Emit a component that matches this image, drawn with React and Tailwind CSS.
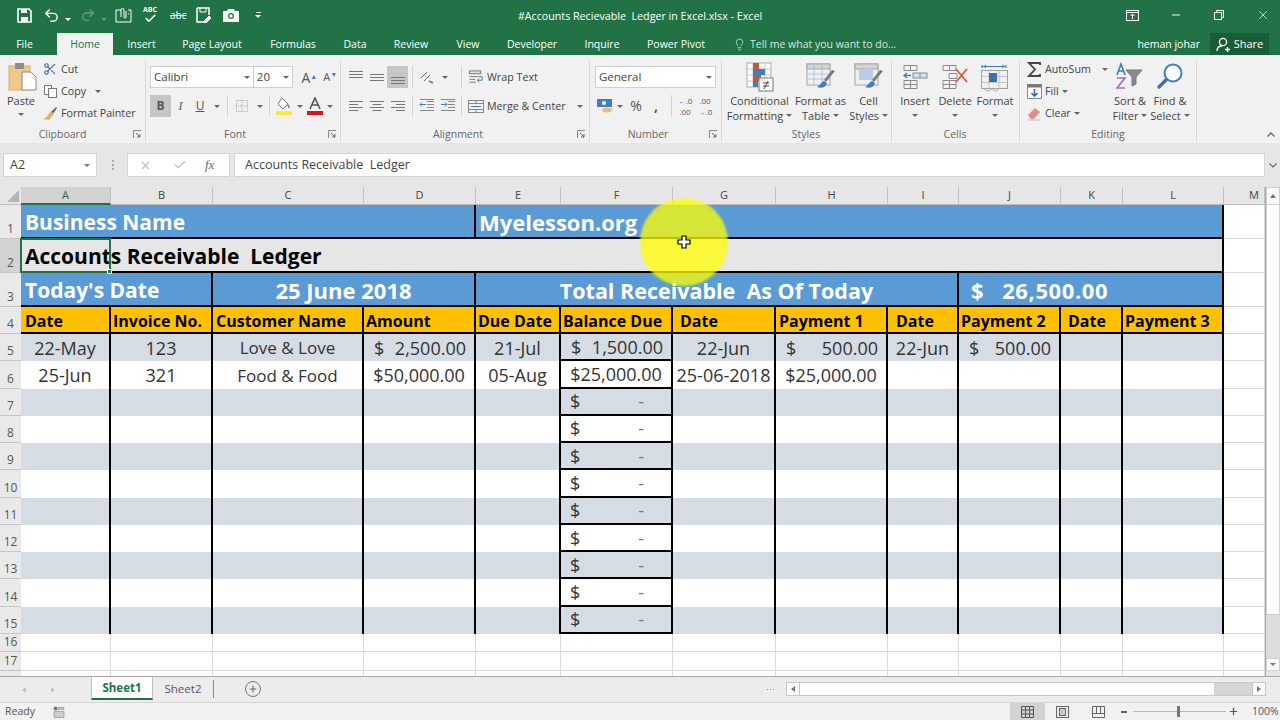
import { Undo2, Redo2, Scissors, Lightbulb, Minus, X, Check, Plus } from "lucide-react";

const Caret = ({ className = "border-t-[#666]" }) => (
  <span className={`inline-block w-0 h-0 border-x-[3px] border-x-transparent border-t-[3px] ${className}`} />
);

const Launcher = () => (
  <svg width="9" height="9" viewBox="0 0 9 9" className="absolute right-[3px] bottom-[3px]">
    <path d="M0.5 8V0.5H8" fill="none" stroke="#888" />
    <path d="M3 3l4 4M7 4v3H4" fill="none" stroke="#666" />
  </svg>
);

const Sep = ({ className = "" }) => <div className={`w-px h-[22px] bg-[#d2d2d2] ${className}`} />;

const Lines = ({ kind }) => {
  const rows = {
    top: [[2, 14], [5, 14], [8, 14]],
    mid: [[5, 14], [8, 14], [11, 14]],
    bot: [[8, 14], [11, 14], [14, 14]],
    left: [[3, 14], [6, 9], [9, 14], [12, 9]],
    center: [[3, 14], [6, 9], [9, 14], [12, 9]],
    right: [[3, 14], [6, 9], [9, 14], [12, 9]],
  }[kind];
  return (
    <svg width="16" height="16" viewBox="0 0 16 16">
      {rows.map(([y, w]) => {
        const x = kind === "center" ? 8 - w / 2 : kind === "right" ? 15 - w : 1;
        return <path key={y} d={`M${x} ${y}.5h${w}`} stroke="#777" />;
      })}
    </svg>
  );
};

const Group = ({ className, label, launcher = true, children }) => (
  <div className={`relative flex flex-col h-full shrink-0 border-r border-[#d8d8d8] ${className}`}>
    <div className="flex-1 min-h-0">{children}</div>
    <div className="h-[15px] leading-[15px] text-center text-[10.5px] text-[#666]">{label}</div>
    {launcher && <Launcher />}
  </div>
);

const SmallRow = ({ icon, label, caret }) => (
  <div className="h-[22px] flex items-center gap-[3px] text-[10.7px] text-[#444]">
    <span className="w-[16px] flex justify-center">{icon}</span>
    <span>{label}</span>
    {caret && <Caret />}
  </div>
);

const BigBtn = ({ icon, a, b, caretBelow, className }) => (
  <div className={`flex flex-col items-center shrink-0 text-[11px] leading-[15px] text-[#444] ${className}`}>
    <div className="h-[30px] mt-[2px] flex items-center justify-center">{icon}</div>
    <span className="mt-[1px] whitespace-nowrap">{a}</span>
    {caretBelow ? (
      <span className="h-[15px] flex items-center"><Caret /></span>
    ) : (
      <span className="whitespace-nowrap flex items-center gap-[3px]">{b}<Caret /></span>
    )}
  </div>
);

const PasteIcon = () => (
  <svg width="30" height="30" viewBox="0 0 30 30">
    <rect x="1" y="4" width="21" height="24" fill="#edc98a" stroke="#d9b06a" />
    <rect x="7" y="1" width="9" height="6" fill="#8c8c8c" />
    <path d="M14 10h9l5 5v13H14z" fill="#fff" stroke="#8a8a8a" />
  </svg>
);

const CondIcon = () => (
  <svg width="30" height="30" viewBox="0 0 30 30">
    <rect x="2" y="1" width="24" height="24" fill="#fff" stroke="#a9a9a9" />
    <path d="M8 1v24M20 1v24M2 7h24M2 13h24M2 19h24" stroke="#c9c9c9" />
    <rect x="8" y="1" width="6" height="6" fill="#c4563c" />
    <rect x="8" y="7" width="12" height="6" fill="#3f7fc0" />
    <rect x="8" y="13" width="8" height="6" fill="#c4563c" />
    <rect x="8" y="19" width="5" height="6" fill="#3f7fc0" />
    <rect x="14" y="16" width="14" height="13" fill="#fff" stroke="#777" />
    <path d="M18 21h6M18 24h6M23 19l-4 8" stroke="#444" fill="none" />
  </svg>
);

const TableIcon = ({ small }) => (
  <svg width="30" height="30" viewBox="0 0 30 30">
    <rect x="1" y="2" width="23" height="21" fill="#eef1f6" stroke="#a5a5a5" />
    <rect x="1" y="2" width="23" height="5" fill="#d5d5d5" stroke="#a5a5a5" />
    {small ? (
      <rect x="5" y="8" width="14" height="10" fill="#b8cde8" />
    ) : (
      <path d="M8 2v21M16 2v21M1 12h23M1 17h23" stroke="#b9c3d3" />
    )}
    <path d="M29 9l-9 11-2-2 8-10z" fill="#7a7a7a" />
    <path d="M18 19c-3 1-3 4-7 6 5 2 9 0 10-4z" fill="#3f7fc0" />
  </svg>
);

const InsertIcon = () => (
  <svg width="28" height="30" viewBox="0 0 28 30" fill="none">
    <path d="M3 3.5h13v5H3zM9.5 3.5v5M3 18.5h13v8H3zM3 22.5h13M9.5 18.5v8" stroke="#8a8a8a" />
    <rect x="12" y="11" width="14" height="5" stroke="#8a8a8a" fill="#d6e2f1" />
    <path d="M19 11v5" stroke="#8a8a8a" />
    <path d="M10 13.5H3M6 11l-3 2.5L6 16" stroke="#3f7fc0" strokeWidth="1.3" />
  </svg>
);

const DeleteIcon = () => (
  <svg width="30" height="30" viewBox="0 0 30 30" fill="none">
    <path d="M3 3.5h13v5H3zM9.5 3.5v5M3 18.5h13v8H3zM3 22.5h13M9.5 18.5v8M9 11.5h8v5H9z" stroke="#8a8a8a" />
    <path d="M16 7l11 13M27 7L16 20" stroke="#d9593d" strokeWidth="1.8" />
  </svg>
);

const FormatIcon = () => (
  <svg width="30" height="30" viewBox="0 0 30 30" fill="none">
    <path d="M2 3v3M2 4.5h24M26 3v3M4 4.5l2-1.5M4 4.5l2 1.5M24 4.5l-2-1.5M24 4.5l-2 1.5" stroke="#3f7fc0" />
    <rect x="1.5" y="8.5" width="26" height="18" stroke="#a0a0a0" />
    <path d="M9 8.5v18M19 8.5v18M1.5 14.5h26M1.5 20.5h26" stroke="#c4c4c4" />
    <rect x="9" y="11" width="8" height="9" fill="#3f6fa8" />
    <path d="M4 26.5c3 3 6 3 8 0 2 3 5 3 7 0" stroke="#a0a0a0" />
  </svg>
);

const SortIcon = () => (
  <svg width="30" height="30" viewBox="0 0 30 30" fill="none">
    <path d="M2 13l4-11 4 11M3.5 9h5" stroke="#3f7fc0" strokeWidth="1.6" />
    <path d="M2 16h8l-8 10h8" stroke="#a56cc1" strokeWidth="1.6" />
    <path d="M11 8h16l-6 7v7l-4 2v-9z" fill="#8a8a8a" stroke="#777" />
  </svg>
);

const FindIcon = () => (
  <svg width="30" height="30" viewBox="0 0 30 30" fill="none">
    <circle cx="18" cy="11" r="8.5" stroke="#3f7fc0" strokeWidth="2" fill="#fff" />
    <path d="M11 18l-7 7" stroke="#3f6fa8" strokeWidth="3.4" strokeLinecap="round" />
  </svg>
);

const Ribbon = () => (
  <div className="h-[88px] shrink-0 bg-[#f1f1f1] flex pt-[5px] pb-[1px] font-['Open_Sans',sans-serif]">
    <Group className="w-[146px]" label={<span className="pr-[20px]">Clipboard</span>}>
      <div className="flex">
        <div className="w-[42px] flex flex-col items-center text-[11px] text-[#444] leading-[15px]">
          <div className="h-[30px] mt-[2px] ml-[4px]"><PasteIcon /></div>
          <span className="mt-[1px]">Paste</span>
          <span className="h-[12px] flex items-center"><Caret /></span>
        </div>
        <div className="flex flex-col -mt-[2px]">
          <SmallRow label="Cut" icon={<Scissors size={14} color="#3f6fa8" />} />
          <SmallRow
            label={<span className="mr-[6px]">Copy</span>}
            caret
            icon={
              <svg width="15" height="15" viewBox="0 0 15 15" fill="#fff" stroke="#777">
                <rect x="1.5" y="1.5" width="7" height="9" />
                <rect x="5.5" y="4.5" width="8" height="9" />
              </svg>
            }
          />
          <SmallRow
            label="Format Painter"
            icon={
              <svg width="16" height="15" viewBox="0 0 16 15">
                <path d="M9 6l5-5 1 1-4 6z" fill="#666" />
                <path d="M9 5l3 3-5 6-6-1c3-1 5-4 8-8z" fill="#e0b25e" />
              </svg>
            }
          />
        </div>
      </div>
    </Group>

    <Group className="w-[195px] pl-[4px]" label={<span className="pr-[20px]">Font</span>}>
      <div className="flex items-center mt-[6px] h-[22px]">
        <div className="w-[105px] h-[22px] bg-white border border-[#cfcfcf] flex items-center justify-between px-[3px] text-[11.5px] text-[#444]">
          Calibri<Caret />
        </div>
        <div className="w-[40px] h-[22px] bg-white border border-[#cfcfcf] border-l-0 flex items-center justify-between px-[3px] text-[11.5px] text-[#444]">
          20<Caret />
        </div>
        <div className="ml-[6px] w-[20px] text-center text-[14px] text-[#555]">A<sup className="text-[7px] text-[#3f7fc0]">▲</sup></div>
        <div className="ml-[1px] w-[20px] text-center text-[11px] text-[#555]">A<sup className="text-[7px] text-[#3f7fc0]">▼</sup></div>
      </div>
      <div className="flex items-center mt-[7px] h-[22px] text-[#555]">
        <div className="w-[21px] h-[22px] bg-[#c6c6c6] flex items-center justify-center text-[12px] font-bold">B</div>
        <div className="w-[19px] text-center text-[12px] italic font-['Liberation_Serif',serif]">I</div>
        <div className="w-[20px] text-center text-[12px] underline">U</div>
        <div className="w-[14px] flex justify-center"><Caret /></div>
        <Sep className="ml-[3px]" />
        <div className="w-[28px] flex justify-center">
          <svg width="14" height="14" viewBox="0 0 14 14" fill="none" stroke="#aaa" strokeDasharray="1 1">
            <rect x="1.5" y="1.5" width="11" height="11" />
            <path d="M7 1v12M1 7h12" />
          </svg>
        </div>
        <div className="w-[8px] flex justify-center"><Caret /></div>
        <Sep className="ml-[5px]" />
        <div className="w-[26px] ml-[1px] flex justify-center">
          <svg width="16" height="18" viewBox="0 0 16 18">
            <path d="M6 1l6 6-5 5-5-5z" fill="#fff" stroke="#777" />
            <path d="M12 7c2 2 2 4 1 4s-2-2-1-4z" fill="#3f7fc0" />
            <rect x="0" y="14" width="16" height="4" fill="#f6ee3c" />
          </svg>
        </div>
        <div className="w-[6px] flex justify-center"><Caret /></div>
        <div className="w-[24px] flex justify-center">
          <svg width="16" height="18" viewBox="0 0 16 18">
            <path d="M3 12L8 1l5 11M5 8h6" fill="none" stroke="#555" strokeWidth="1.6" />
            <rect x="0" y="14" width="16" height="4" fill="#d2141e" />
          </svg>
        </div>
        <div className="w-[6px] flex justify-center"><Caret /></div>
      </div>
    </Group>

    <Group className="w-[249px] pl-[4px]" label={<span className="pr-[18px]">Alignment</span>}>
      <div className="flex items-center mt-[6px] h-[22px]">
        <div className="w-[21px] flex justify-center"><Lines kind="top" /></div>
        <div className="w-[21px] flex justify-center"><Lines kind="mid" /></div>
        <div className="w-[21px] h-[22px] bg-[#c6c6c6] flex justify-center items-center"><Lines kind="bot" /></div>
        <Sep className="ml-[4px]" />
        <div className="w-[28px] flex justify-center">
          <svg width="16" height="16" viewBox="0 0 16 16" fill="none" stroke="#666">
            <path d="M2 9l6-6M5 12l6-6" />
            <path d="M10 12l4 2" stroke="#3f7fc0" strokeWidth="1.5" />
          </svg>
        </div>
        <div className="w-[8px] flex justify-center"><Caret /></div>
        <Sep className="ml-[12px]" />
        <div className="ml-[6px]">
          <SmallRow
            label="Wrap Text"
            icon={
              <svg width="17" height="15" viewBox="0 0 17 15" fill="none" stroke="#777">
                <rect x="1.5" y="0.5" width="12" height="3" fill="#ddd" />
                <path d="M1.5 6.5h9M1.5 9.5h6M1.5 12.5h7" />
                <path d="M11 6.5h4v4h-5M12 8.5l-2 2 2 2" stroke="#3f7fc0" />
              </svg>
            }
          />
        </div>
      </div>
      <div className="flex items-center mt-[7px] h-[22px]">
        <div className="w-[21px] flex justify-center"><Lines kind="left" /></div>
        <div className="w-[21px] flex justify-center"><Lines kind="center" /></div>
        <div className="w-[21px] flex justify-center"><Lines kind="right" /></div>
        <Sep className="ml-[4px]" />
        <div className="w-[21px] ml-[3px] flex justify-center">
          <svg width="16" height="14" viewBox="0 0 16 14" fill="none">
            <path d="M8 2.5h7M8 5.5h7M8 8.5h7M1 11.5h14M1 0.5h14" stroke="#888" />
            <path d="M7 5.5H1M3 3.5l-2 2 2 2" stroke="#3f7fc0" />
          </svg>
        </div>
        <div className="w-[21px] flex justify-center">
          <svg width="16" height="14" viewBox="0 0 16 14" fill="none">
            <path d="M8 2.5h7M8 5.5h7M8 8.5h7M1 11.5h14M1 0.5h14" stroke="#888" />
            <path d="M1 5.5h6M5 3.5l2 2-2 2" stroke="#3f7fc0" />
          </svg>
        </div>
        <Sep className="ml-[3px]" />
        <div className="ml-[6px] flex items-center gap-[11px]">
          <SmallRow
            label="Merge & Center"
            icon={
              <svg width="16" height="15" viewBox="0 0 16 15" fill="none" stroke="#888">
                <rect x="0.5" y="1.5" width="15" height="12" />
                <path d="M0.5 4.5h15M0.5 10.5h15M8 1.5v3M8 10.5v3" />
                <path d="M3 7.5h10" stroke="#3f7fc0" />
              </svg>
            }
          />
          <Caret />
        </div>
      </div>
    </Group>

    <Group className="w-[132px] pl-[5px]" label={<span className="pr-[20px]">Number</span>}>
      <div className="mt-[6px] w-[121px] h-[22px] bg-white border border-[#cfcfcf] flex items-center justify-between px-[3px] text-[11.5px] text-[#444]">
        General<Caret />
      </div>
      <div className="flex items-center mt-[7px] h-[22px] text-[#555]">
        <div className="w-[20px] flex justify-center">
          <svg width="18" height="16" viewBox="0 0 18 16">
            <rect x="1" y="1" width="15" height="8" fill="#3f7fc0" />
            <circle cx="8" cy="5" r="2" fill="#fff" />
            <ellipse cx="11" cy="12" rx="5" ry="2.5" fill="#e9bf6f" />
          </svg>
        </div>
        <div className="w-[10px] flex justify-center"><Caret /></div>
        <div className="w-[20px] ml-[1px] text-center text-[14px] leading-[20px]">%</div>
        <div className="w-[20px] text-center text-[14px] font-bold leading-[14px]">,</div>
        <Sep className="ml-[5px]" />
        <div className="w-[20px] ml-[3px] flex flex-col items-center text-[8px] leading-[11px] text-[#555]">
          <span><span className="text-[#3f7fc0]">←</span>.0</span>
          <span>.00</span>
        </div>
        <div className="w-[20px] flex flex-col items-center text-[8px] leading-[11px] text-[#555]">
          <span>.00</span>
          <span><span className="text-[#3f7fc0]">→</span>.0</span>
        </div>
      </div>
    </Group>

    <Group className="w-[170px] pl-[7px]" label={<span className="pr-[8px]">Styles</span>} launcher={false}>
      <div className="flex items-start gap-[1px]">
        <BigBtn className="w-[61px]" icon={<CondIcon />} a="Conditional" b="Formatting" />
        <BigBtn className="w-[59px]" icon={<TableIcon />} a="Format as" b="Table" />
        <BigBtn className="w-[35px]" icon={<TableIcon small />} a="Cell" b="Styles" />
      </div>
    </Group>

    <Group className="w-[128px] pl-[3px]" label={<span className="pr-[4px]">Cells</span>} launcher={false}>
      <div className="flex items-start">
        <BigBtn className="w-[40px]" icon={<InsertIcon />} a="Insert" caretBelow />
        <BigBtn className="w-[40px]" icon={<DeleteIcon />} a="Delete" caretBelow />
        <BigBtn className="w-[40px]" icon={<FormatIcon />} a="Format" caretBelow />
      </div>
    </Group>

    <Group className="w-[177px] pl-[6px]" label={<span className="pr-[6px]">Editing</span>} launcher={false}>
      <div className="flex">
        <div className="w-[85px] flex flex-col -mt-[2px] text-[#444]">
          <div className="flex items-center gap-[11px]">
            <SmallRow
              label="AutoSum"
              icon={
                <svg width="15" height="15" viewBox="0 0 15 15" fill="none" stroke="#444" strokeWidth="1.8">
                  <path d="M13 3V1H2l6 6.5L2 14h11v-2" />
                </svg>
              }
            />
            <Caret />
          </div>
          <SmallRow
            label="Fill"
            caret
            icon={
              <svg width="15" height="15" viewBox="0 0 15 15">
                <rect x="0.5" y="0.5" width="14" height="14" fill="#fff" stroke="#888" />
                <rect x="0.5" y="0.5" width="14" height="3" fill="#777" />
                <path d="M7.5 5v7M4.5 9l3 3 3-3" fill="none" stroke="#2f6fb0" strokeWidth="1.6" />
              </svg>
            }
          />
          <SmallRow
            label="Clear"
            caret
            icon={
              <svg width="15" height="15" viewBox="0 0 15 15">
                <path d="M1 9l7-7 5 4-6 7H4z" fill="#e58c8c" />
                <path d="M1 14h12" stroke="#bbb" />
              </svg>
            }
          />
        </div>
        <BigBtn className="w-[38px]" icon={<SortIcon />} a="Sort &" b="Filter" />
        <BigBtn className="w-[42px]" icon={<FindIcon />} a="Find &" b="Select" />
      </div>
    </Group>

    <div className="flex-1 relative">
      <svg width="8" height="5" viewBox="0 0 8 5" className="absolute right-[5px] bottom-[5px]">
        <path d="M0.5 4.5L4 1l3.5 3.5" fill="none" stroke="#666" strokeWidth="1.3" />
      </svg>
    </div>
  </div>
);

const TitleBar = () => (
  <div className="relative h-[30px] shrink-0 flex items-center text-white font-['Open_Sans',sans-serif]">
    <div className="flex items-center pl-[17px]">
      <svg width="15" height="15" viewBox="0 0 15 15">
        <path d="M1 1h11l2 2v11H1z" fill="none" stroke="#fff" strokeWidth="1.6" />
        <path d="M4 1h6v4H4zM4 9h7v5H4z" fill="#fff" />
      </svg>
      <span className="ml-[11px]"><Undo2 size={17} strokeWidth={2} /></span>
      <span className="ml-[5px]"><Caret className="border-t-white" /></span>
      <span className="ml-[9px] opacity-30"><Redo2 size={16} /></span>
      <span className="ml-[5px] opacity-30"><Caret className="border-t-white" /></span>
      <svg width="17" height="16" viewBox="0 0 17 16" fill="none" stroke="#fff" className="ml-[8px]">
        <path d="M6 3H1v12h15V3h-3" />
        <path d="M6 10V3a1.5 1.5 0 013 0v7a1 1 0 002 0V4" />
        <path d="M13 7h1" />
      </svg>
      <div className="ml-[10px] w-[16px] relative h-[18px]">
        <span className="block text-[7px] leading-[8px] font-bold text-center">ABC</span>
        <Check size={13} strokeWidth={3} className="absolute left-[2px] top-[6px]" />
      </div>
      <span className="ml-[12px] text-[10px] line-through">abc</span>
      <svg width="16" height="16" viewBox="0 0 16 16" fill="none" stroke="#fff" className="ml-[10px]">
        <path d="M1 1h12v7M1 1v14h7" strokeWidth="1.5" />
        <path d="M4 1v4h6V1" />
        <path d="M8 14l5-5 2 2-5 5H8z" fill="#fff" />
      </svg>
      <svg width="16" height="13" viewBox="0 0 16 13" className="ml-[11px]">
        <path d="M0 2h4l1-2h6l1 2h4v11H0z" fill="#fff" />
        <circle cx="8" cy="7" r="3" fill="#217346" />
        <circle cx="8" cy="7" r="1.7" fill="#fff" />
      </svg>
      <div className="ml-[16px] flex flex-col items-center gap-[2px]">
        <span className="w-[5px] h-px bg-white" />
        <Caret className="border-t-white" />
      </div>
    </div>
    <div className="absolute inset-x-0 top-[9px] text-center text-[10.7px] leading-[15px]">#Accounts Recievable&nbsp; Ledger in Excel.xlsx - Excel</div>
    <div className="ml-auto flex items-center pr-[10px]">
      <svg width="13" height="11" viewBox="0 0 13 11" fill="none" stroke="#fff">
        <rect x="0.5" y="0.5" width="12" height="10" />
        <path d="M0.5 2.5h12M6.5 9V4.5M4.5 6l2-2 2 2" />
      </svg>
      <Minus size={12} className="ml-[31px]" />
      <svg width="10" height="10" viewBox="0 0 10 10" fill="none" stroke="#fff" className="ml-[32px]">
        <rect x="0.5" y="2.5" width="7" height="7" />
        <path d="M2.5 2V0.5h7v7H8" />
      </svg>
      <X size={14} strokeWidth={1.2} className="ml-[32px]" />
    </div>
  </div>
);

const tabs = [
  ["Insert", "w-[57px]"],
  ["Page Layout", "w-[84px]"],
  ["Formulas", "w-[78px]"],
  ["Data", "w-[46px]"],
  ["Review", "w-[66px]"],
  ["View", "w-[48px]"],
  ["Developer", "w-[80px]"],
  ["Inquire", "w-[60px]"],
  ["Power Pivot", "w-[88px]"],
];

const TabBar = () => (
  <div className="h-[25px] shrink-0 flex items-end text-[10.5px] text-white font-['Open_Sans',sans-serif]">
    <div className="w-[49px] h-[22px] pt-[1px] flex items-center justify-center">File</div>
    <div className="w-[56px] ml-[8px] h-[22px] pt-[1px] bg-[#f1f1f1] text-[#217346] flex items-center justify-center">Home</div>
    {tabs.map(([t, w]) => (
      <div key={t} className={`${w} h-[22px] pt-[1px] flex items-center justify-center`}>{t}</div>
    ))}
    <div className="h-[22px] pt-[1px] flex items-center ml-[13px] gap-[4px] text-[#d9e7df]">
      <Lightbulb size={13} strokeWidth={1.4} />
      <span>Tell me what you want to do...</span>
    </div>
    <div className="ml-auto h-[22px] pt-[1px] flex items-center">
      <span className="mr-[10px]">heman johar</span>
      <div className="w-[59px] h-[22px] -mt-[1px] bg-[#1a5c38] flex items-center justify-center gap-[4px] mr-[11px] text-[11px]">
        <svg width="14" height="15" viewBox="0 0 14 15" fill="none" stroke="#fff" strokeWidth="1.3">
          <circle cx="7" cy="5" r="3.6" />
          <path d="M1 14c0-3 2-5 5-5M9 12.5h5M11.5 10v5" />
        </svg>
        Share
      </div>
    </div>
  </div>
);

const FormulaBar = () => (
  <div className="h-[44px] shrink-0 bg-[#e6e6e6] flex items-center text-[#444] font-['Open_Sans',sans-serif]">
    <div className="ml-[3px] w-[94px] h-[24px] bg-white border border-[#d4d4d4] flex items-center justify-between px-[6px] text-[12.5px]">
      A2<Caret className="border-t-[#777]" />
    </div>
    <div className="ml-[15px] flex flex-col gap-[2px]">
      <span className="w-[2px] h-[2px] bg-[#aaa]" />
      <span className="w-[2px] h-[2px] bg-[#aaa]" />
      <span className="w-[2px] h-[2px] bg-[#aaa]" />
    </div>
    <div className="ml-[13px] w-[103px] h-[24px] bg-white border border-[#d4d4d4] flex items-center text-[#bbb]">
      <X size={13} className="ml-[11px]" />
      <Check size={14} className="ml-[21px]" />
      <span className="ml-[18px] text-[13px] italic text-[#666] font-['Liberation_Serif',serif]">fx</span>
    </div>
    <div className="ml-[4px] flex-1 h-[24px] bg-white border border-[#d4d4d4] flex items-center pl-[10px] text-[12.5px] mr-[15px]">
      Accounts Receivable&nbsp; Ledger
    </div>
    <svg width="8" height="5" viewBox="0 0 8 5" className="absolute left-[1269px]">
      <path d="M0.5 0.5L4 4l3.5-3.5" fill="none" stroke="#666" strokeWidth="1.2" />
    </svg>
  </div>
);

const columns = ["A", "B", "C", "D", "E", "F", "G", "H", "I", "J", "K", "L", "M"];

const rows = [
  { a: "22-May", b: "123", c: "Love & Love", d: "2,500.00", e: "21-Jul", f: "1,500.00", g: "22-Jun", h: "500.00", i: "22-Jun", j: "500.00" },
  { a: "25-Jun", b: "321", c: "Food & Food", d: "$50,000.00", e: "05-Aug", f: "$25,000.00", g: "25-06-2018", h: "$25,000.00" },
  {}, {}, {}, {}, {}, {}, {}, {}, {},
];

const RowNum = ({ n, on }) => (
  <div className={`flex items-end justify-center pb-[3px] border-b border-[#c6c6c6] text-[12px] leading-[12px] text-[#555] ${on ? "bg-[#d2d2d2]" : "bg-[#e9e9e9]"}`}>{n}</div>
);

const Heading = ({ className, children }) => (
  <div className={`flex items-center pt-[2px] text-[#000] font-bold text-[16px] border-r-2 border-b-2 border-black bg-[#ffc000] whitespace-nowrap ${className}`}>{children}</div>
);

const Body = ({ bg, className = "", children }) => (
  <div className={`flex items-center justify-center min-w-0 pt-[1px] border-r-[2.5px] border-black text-[18px] text-[#333] whitespace-nowrap ${bg} ${className}`}>{children}</div>
);

const Money = ({ bg, value, className = "", pad }) => {
  if (!value) return <Body bg={bg} className={className} />;
  if (value[0] === "$") return <Body bg={bg} className={className}>{value}</Body>;
  return (
    <Body bg={bg} className={`justify-between! ${pad} ${className}`}>
      <span>$</span>
      <span>{value}</span>
    </Body>
  );
};

const Blank = () => <div className="bg-white border-b border-r border-[#d8d8d8]" />;

const Sheet = () => (
  <div className="relative h-[489px] shrink-0 flex bg-white font-['Open_Sans',sans-serif]">
    <div className="relative grid w-[1265px] shrink-0 grid-cols-[21px_90px_102px_151px_112px_85px_112px_103px_112px_71px_102px_62px_101px_41px] grid-rows-[18px_34px_34px_34px_27px_repeat(11,27.27px)_18px_19px_5px]">
      <div className="bg-[#e6e6e6] flex items-end justify-end p-[2px] border-b border-[#bbb]">
        <span className="w-0 h-0 border-l-[12px] border-l-transparent border-b-[12px] border-b-[#b4b4b4]" />
      </div>
      {columns.map((c) => (
        <div
          key={c}
          className={`flex items-center justify-center text-[11px] border-r border-[#c2c2c2] ${
            c === "A" ? "bg-[#d2d2d2] text-[#217346] border-b-2 border-b-[#217346]" : "bg-[#e6e6e6] text-[#444] border-b border-b-[#bbb]"
          } ${c === "M" ? "pl-[20px]" : ""}`}
        >
          {c}
        </div>
      ))}

      <RowNum n={1} />
      <div className="col-span-4 flex items-center pl-[4px] pt-[4px] bg-[#5b9bd5] text-white font-bold text-[21px] border-b-2 border-r-2 border-black">Business Name</div>
      <div className="col-span-8 flex items-center pl-[3px] pt-[2px] bg-[#5b9bd5] text-white font-bold text-[22px] border-b-2 border-r-2 border-black">Myelesson.org</div>
      <Blank />

      <RowNum n={2} on />
      <div className="col-span-12 flex items-center pl-[4px] pt-[4px] bg-[#e7e6e6] text-[#000] font-bold text-[21px] border-b-2 border-r-2 border-black">Accounts Receivable&nbsp; Ledger</div>
      <Blank />

      <RowNum n={3} />
      <div className="col-span-2 flex items-center pl-[4px] pt-[4px] bg-[#5b9bd5] text-white font-bold text-[21px] border-b-2 border-r-2 border-black">Today's Date</div>
      <div className="col-span-2 flex items-center justify-center pt-[3px] bg-[#5b9bd5] text-white font-bold text-[22px] border-b-2 border-r-2 border-black">25 June 2018</div>
      <div className="col-span-5 flex items-center justify-center pt-[4px] bg-[#5b9bd5] text-white font-bold text-[21.5px] border-b-2 border-r-2 border-black">Total Receivable&nbsp; As Of Today</div>
      <div className="col-span-3 flex items-center pl-[12px] pt-[3px] gap-[18px] bg-[#5b9bd5] text-white font-bold text-[22px] tracking-[0.6px] border-b-2 border-r-2 border-black">
        <span>$</span>
        <span>26,500.00</span>
      </div>
      <Blank />

      <RowNum n={4} />
      <Heading className="pl-[4px]">Date</Heading>
      <Heading className="pl-[2px]">Invoice No.</Heading>
      <Heading className="pl-[3px]">Customer Name</Heading>
      <Heading className="pl-[2px]">Amount</Heading>
      <Heading className="pl-[2px]">Due Date</Heading>
      <Heading className="pl-[2px]">Balance Due</Heading>
      <Heading className="pl-[7px]">Date</Heading>
      <Heading className="pl-[3px]">Payment 1</Heading>
      <Heading className="pl-[8px]">Date</Heading>
      <Heading className="pl-[2px]">Payment 2</Heading>
      <Heading className="pl-[7px]">Date</Heading>
      <Heading className="pl-[2px]">Payment 3</Heading>
      <Blank />

      {rows.map((r, idx) => {
        const bg = idx % 2 === 0 ? "bg-[#d6dce4]" : "bg-white";
        return [
          <RowNum key={`n${idx}`} n={idx + 5} />,
          <Body key="a" bg={bg}>{r.a}</Body>,
          <Body key="b" bg={bg}>{r.b}</Body>,
          <Body key="c" bg={bg} className="text-[17px]!">{r.c}</Body>,
          <Money key="d" bg={bg} value={r.d} pad="pl-[10px] pr-[8px]" />,
          <Body key="e" bg={bg}>{r.e}</Body>,
          idx < 2 ? (
            <Money key="f" bg={bg} value={r.f} pad="pl-[10px] pr-[8px]" className="border-b-2" />
          ) : (
            <Body key="f" bg={bg} className="justify-between! pl-[9px] pr-[27px] border-b-2">
              <span>$</span>
              <span className="text-[#777]">-</span>
            </Body>
          ),
          <Body key="g" bg={bg}>{r.g}</Body>,
          <Money key="h" bg={bg} value={r.h} pad="pl-[10px] pr-[8px]" />,
          <Body key="i" bg={bg}>{r.i}</Body>,
          <Money key="j" bg={bg} value={r.j} pad="pl-[10px] pr-[8px]" />,
          <Body key="k" bg={bg} />,
          <Body key="l" bg={bg} />,
          <Blank key="m" />,
        ];
      })}

      {[16, 17].map((n) => [
        <RowNum key={n} n={n} />,
        ...columns.map((c) => <Blank key={`${n}${c}`} />),
      ])}
      <div className="bg-[#e9e9e9]" />
      {columns.map((c) => <div key={c} className="bg-white border-r border-[#d8d8d8]" />)}

      {/* selected cell */}
      <div className="absolute left-[20px] top-[51px] w-[91px] h-[35px] border-2 border-[#217346]">
        <span className="absolute -right-[3px] -bottom-[3px] w-[5px] h-[5px] bg-[#217346] border border-white" />
      </div>
    </div>

    <div className="flex-1 flex flex-col bg-[#dcdcdc] border-l border-[#aaa]">
      <div className="h-[18px] bg-[#fafafa] border border-[#d0d0d0] flex items-center justify-center">
        <span className="w-0 h-0 border-x-[3px] border-x-transparent border-b-[4px] border-b-[#777]" />
      </div>
      <div className="h-[410px] bg-white border-x border-b border-[#d0d0d0]" />
      <div className="mt-auto h-[13px] bg-[#fafafa] border border-[#d0d0d0] flex items-center justify-center">
        <Caret className="border-t-[#777]" />
      </div>
      <div className="h-[5px] bg-[#e6e6e6]" />
    </div>
  </div>
);

const SheetTabs = () => (
  <div className="h-[26px] shrink-0 bg-[#ececec] border-t border-[#a8a8a8] flex items-center font-['Open_Sans',sans-serif] text-[11.5px]">
    <span className="ml-[22px] w-0 h-0 border-y-[3px] border-y-transparent border-r-[4px] border-r-[#c4c4c4]" />
    <span className="ml-[25px] w-0 h-0 border-y-[3px] border-y-transparent border-l-[4px] border-l-[#c4c4c4]" />
    <div className="ml-[36px] w-[62px] h-[23px] -mt-[3px] pt-[1px] bg-white border-x border-b-2 border-x-[#bbb] border-b-[#217346] text-[#217346] font-bold flex items-center justify-center">Sheet1</div>
    <div className="w-[60px] -mt-[2px] text-center text-[#555]">Sheet2</div>
    <div className="w-px h-[18px] -mt-[2px] bg-[#888]" />
    <div className="ml-[31px] -mt-[2px] w-[16px] h-[16px] rounded-full border border-[#777] flex items-center justify-center text-[#666]">
      <Plus size={10} strokeWidth={2.5} />
    </div>
    <div className="ml-[506px] flex gap-[2px]">
      <span className="w-px h-px bg-[#888]" />
      <span className="w-px h-px bg-[#888]" />
      <span className="w-px h-px bg-[#888]" />
    </div>
    <div className="ml-[12px] w-[480px] h-[14px] -mt-[2px] flex bg-[#d6d6d6] border border-[#c8c8c8]">
      <div className="w-[13px] bg-[#fafafa] border-r border-[#c8c8c8] flex items-center justify-center">
        <span className="w-0 h-0 border-y-[3px] border-y-transparent border-r-[4px] border-r-[#777]" />
      </div>
      <div className="w-[414px] bg-white" />
      <div className="ml-auto w-[13px] bg-[#fafafa] border-l border-[#c8c8c8] flex items-center justify-center">
        <span className="w-0 h-0 border-y-[3px] border-y-transparent border-l-[4px] border-l-[#777]" />
      </div>
    </div>
  </div>
);

const StatusBar = () => (
  <div className="h-[18px] shrink-0 bg-[#f1f1f1] border-t border-[#d4d4d4] flex items-center text-[10.5px] text-[#555] font-['Open_Sans',sans-serif]">
    <span className="ml-[5px]">Ready</span>
    <svg width="12" height="12" viewBox="0 0 12 12" className="ml-[18px]">
      <circle cx="2.5" cy="2.5" r="2" fill="#777" />
      <path d="M5 1.5h6v2H5zM1 5.5h10v6H1z" fill="#ccc" stroke="#888" strokeWidth="0.6" />
    </svg>
    <div className="ml-auto w-[35px] h-[17px] bg-[#d2d2d2] flex items-center justify-center">
      <svg width="13" height="12" viewBox="0 0 13 12" fill="none" stroke="#555">
        <path d="M0.5 0.5h12v11H0.5zM4.5 0.5v11M8.5 0.5v11M0.5 4h12M0.5 8h12" />
      </svg>
    </div>
    <svg width="13" height="12" viewBox="0 0 13 12" fill="none" stroke="#666" className="ml-[11px]">
      <rect x="0.5" y="0.5" width="12" height="11" />
      <rect x="3.5" y="2.5" width="6" height="7" fill="#ccc" />
    </svg>
    <svg width="13" height="12" viewBox="0 0 13 12" fill="none" stroke="#666" className="ml-[23px]">
      <path d="M0.5 0.5h12v11H0.5zM0.5 7.5h12M4.5 0.5v7M8.5 0.5v7" />
    </svg>
    <span className="ml-[16px] w-[6px] h-[2px] bg-[#666]" />
    <div className="ml-[6px] relative w-[93px] h-px bg-[#bbb]">
      <span className="absolute left-[44px] -top-[5px] w-[3px] h-[11px] bg-[#777]" />
    </div>
    <Plus size={11} strokeWidth={2.5} className="ml-[2px] text-[#555]" />
    <span className="ml-[13px] mr-[1px] w-[27px] whitespace-nowrap overflow-hidden">100%</span>
  </div>
);

const App = () => (
  <div className="relative w-[1280px] h-[720px] overflow-hidden flex flex-col bg-[#217346]">
    <TitleBar />
    <TabBar />
    <Ribbon />
    <FormulaBar />
    <Sheet />
    <SheetTabs />
    <StatusBar />

    {/* presenter's cursor highlight */}
    <div className="absolute left-[640px] top-[198px] w-[88px] h-[88px] rounded-full bg-[#ffff00]/75 blur-[1px]" />
    <svg width="14" height="14" viewBox="0 0 14 14" className="absolute left-[677px] top-[235px]">
      <path d="M5 1h4v4h4v4H9v4H5V9H1V5h4z" fill="#fff" stroke="#000" strokeWidth="1.2" />
    </svg>
  </div>
);

export default App;
